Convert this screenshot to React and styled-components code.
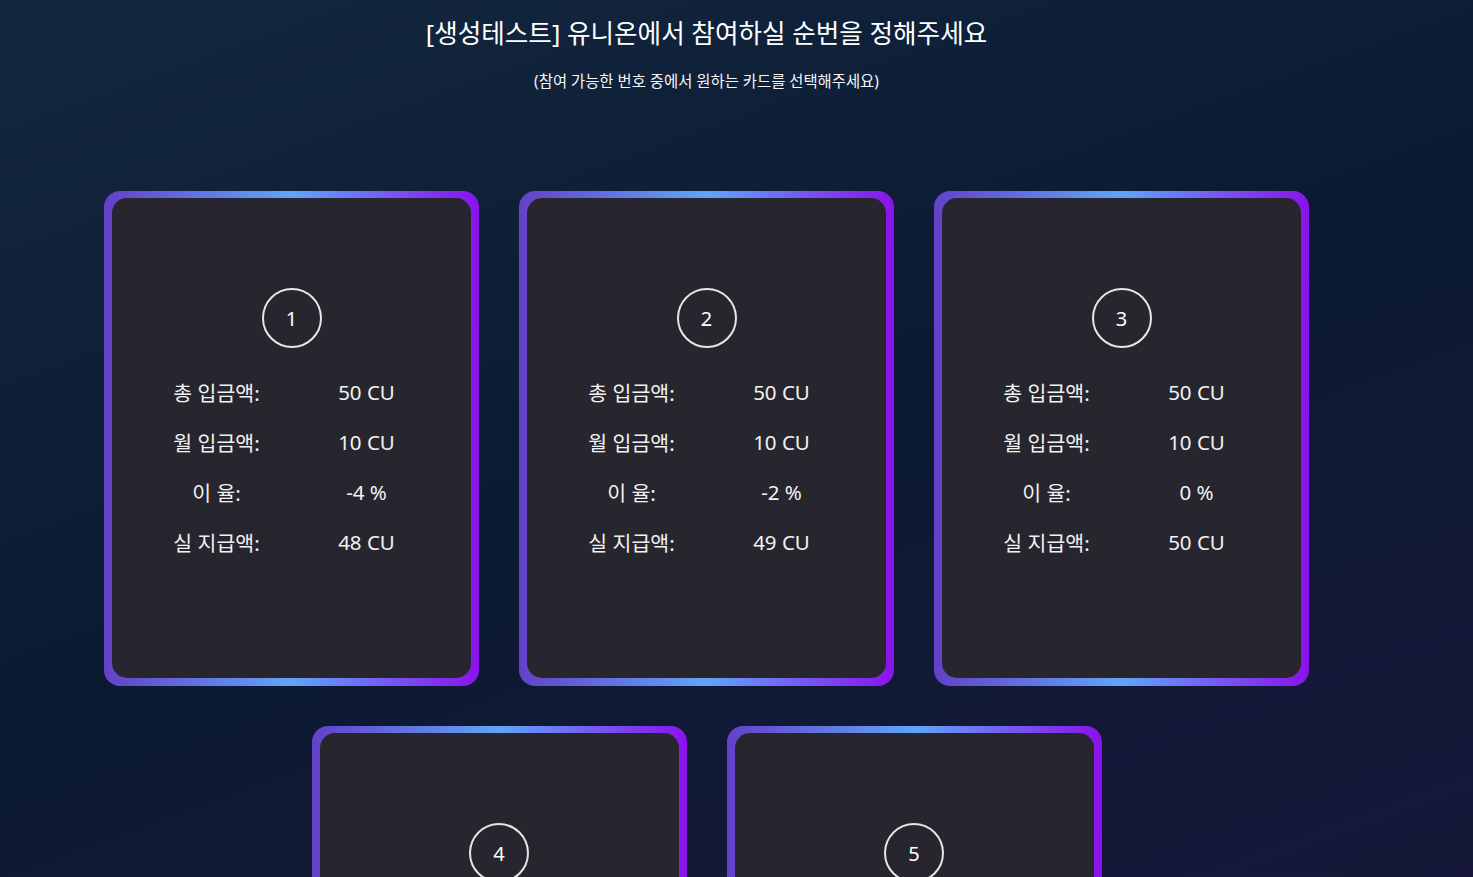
import styled, { createGlobalStyle } from "styled-components";

const GlobalStyle = createGlobalStyle`
  html, body {
    margin: 0;
    padding: 0;
  }
  body {
    min-height: 100vh;
    background: linear-gradient(160deg, #13283f 0%, #0b1a33 50%, #171839 100%);
    background-attachment: fixed;
    color: #f2f2f2;
    font-family: "Noto Sans", "Noto Sans CJK KR", sans-serif;
  }
`;

const Page = styled.div`
  width: 1413px;
  padding-top: 15px;
  display: flex;
  flex-direction: column;
  align-items: center;
`;

const Title = styled.h1`
  margin: 0;
  font-size: 25.6px;
  line-height: 38px;
  font-weight: 400;
  color: #ffffff;
`;

const Subtitle = styled.p`
  margin: 18px 0 0;
  font-size: 15.4px;
  line-height: 22px;
  color: #f5f5f5;
`;

const CardGrid = styled.div`
  margin-top: 98px;
  width: 100%;
  display: flex;
  flex-wrap: wrap;
  justify-content: center;
  gap: 40px;
`;

const CardFrame = styled.div`
  width: 375px;
  height: 495px;
  box-sizing: border-box;
  padding: 7px 8px 8px;
  border-radius: 16px;
  background: linear-gradient(90deg, #6441c8 0%, #60a5fa 50%, #8a12ea 100%);
  cursor: pointer;
`;

const CardBody = styled.div`
  height: 100%;
  border-radius: 15px;
  background: #27262e;
  padding-top: 90px;
  box-sizing: border-box;
  display: flex;
  flex-direction: column;
  align-items: center;
`;

const NumberBadge = styled.div`
  width: 56px;
  height: 56px;
  border: 2px solid #e6e6e6;
  border-radius: 50%;
  display: flex;
  align-items: center;
  justify-content: center;
  font-size: 20px;
  color: #ffffff;
`;

const InfoGrid = styled.div`
  margin-top: 19px;
  display: grid;
  grid-template-columns: 150px 150px;
  grid-auto-rows: 50px;
  align-items: center;
  text-align: center;
  font-size: 20.5px;
  color: #f2f2f2;
`;

const cards = [
  { no: 1, rate: -4, pay: 48 },
  { no: 2, rate: -2, pay: 49 },
  { no: 3, rate: 0, pay: 50 },
  { no: 4, rate: 2, pay: 51 },
  { no: 5, rate: 4, pay: 52 },
];

function Card({ card }) {
  return (
    <CardFrame>
      <CardBody>
        <NumberBadge>{card.no}</NumberBadge>
        <InfoGrid>
          <span>총 입금액:</span>
          <span>50 CU</span>
          <span>월 입금액:</span>
          <span>10 CU</span>
          <span>이 율:</span>
          <span>{card.rate} %</span>
          <span>실 지급액:</span>
          <span>{card.pay} CU</span>
        </InfoGrid>
      </CardBody>
    </CardFrame>
  );
}

function App() {
  return (
    <>
      <GlobalStyle />
      <Page>
        <Title>[생성테스트] 유니온에서 참여하실 순번을 정해주세요</Title>
        <Subtitle>(참여 가능한 번호 중에서 원하는 카드를 선택해주세요)</Subtitle>
        <CardGrid>
          {cards.map((c) => (
            <Card key={c.no} card={c} />
          ))}
        </CardGrid>
      </Page>
    </>
  );
}

export default App;
